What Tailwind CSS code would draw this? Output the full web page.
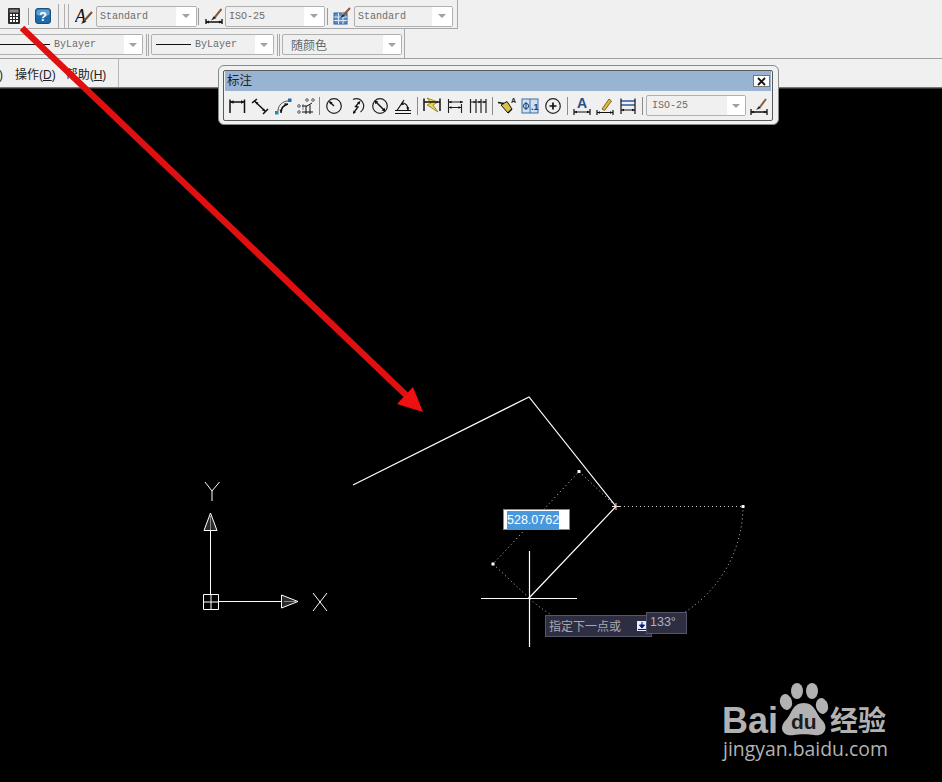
<!DOCTYPE html>
<html>
<head>
<meta charset="utf-8">
<script src="https://cdn.jsdelivr.net/npm/@tailwindcss/browser@4"></script>
</head>
<body class="bg-black">
<div class="relative w-[942px] h-[782px] overflow-hidden bg-black flex flex-col font-['Liberation_Sans','Noto_Sans_CJK_SC',sans-serif]">

  <!-- Toolbar row 1 -->
  <div class="h-[29px] shrink-0 bg-[#f0f0f0]">
    <div class="w-[458px] h-[29px] pt-[4px] border-r border-b border-[#a8a8a8] flex items-center">
      <svg class="ml-[6px] w-[16px] h-[18px] shrink-0" viewBox="0 0 16 18"><rect x="2" y="1" width="12" height="16" rx="1" fill="#2b2b2b"/><rect x="3.5" y="2.5" width="9" height="3" fill="#8a8a8a"/><g fill="#fff"><rect x="4" y="7" width="2" height="2"/><rect x="7" y="7" width="2" height="2"/><rect x="10" y="7" width="2" height="2"/><rect x="4" y="10" width="2" height="2"/><rect x="7" y="10" width="2" height="2"/><rect x="10" y="10" width="2" height="2"/><rect x="4" y="13" width="2" height="2"/><rect x="7" y="13" width="2" height="2"/><rect x="10" y="13" width="2" height="2"/></g></svg>
      <div class="ml-[6px] w-px h-[17px] bg-[#9a9a9a] shrink-0"></div>
      <svg class="ml-[6px] w-[16px] h-[16px] shrink-0" viewBox="0 0 16 16"><rect x="0.5" y="0.5" width="15" height="15" rx="2.5" fill="#1f6aa8" stroke="#174f80"/><rect x="1.5" y="1.5" width="13" height="6" rx="2" fill="#5f9fd0"/><text x="8" y="13" text-anchor="middle" class="font-['Liberation_Sans'] font-bold text-[13px] fill-white">?</text></svg>
      <div class="ml-[7px] w-px h-[24px] bg-[#a8a8a8] shrink-0"></div>
      <div class="ml-[5px] w-px h-[24px] bg-[#b0b0b0] shrink-0"></div>
      <div class="ml-[3px] w-px h-[24px] bg-[#b0b0b0] shrink-0"></div>
      <svg class="ml-[6px] w-[18px] h-[18px] shrink-0" viewBox="0 0 18 18"><text x="0" y="15" class="font-['Liberation_Serif'] italic text-[18px] fill-[#111]">A</text><path d="M6 17 L9 13 L11 15 Z" fill="#222"/><path d="M9.5 13.5 L17 5" stroke="#7a4a2a" stroke-width="2"/></svg>
      <div class="ml-[3px] w-[101px] h-[21px] shrink-0 border border-[#b0b0b0] rounded-[2px] bg-[#f0f0f0] flex items-center justify-between">
        <span class="ml-[3px] font-['Liberation_Mono'] text-[10px] text-[#6c6c6c]">Standard</span>
        <div class="w-[20px] h-[19px] bg-white flex items-center justify-center"><div class="w-0 h-0 border-x-[4px] border-t-[4px] border-x-transparent border-t-[#a0a0a0]"></div></div>
      </div>
      <div class="ml-[1px] w-px h-[17px] bg-[#9a9a9a] shrink-0"></div>
      <svg class="ml-[6px] w-[18px] h-[18px] shrink-0" viewBox="0 0 18 18"><path d="M1 12v5M17 12v5M1 15h16" stroke="#111" stroke-width="1.4" fill="none"/><path d="M1 15l3-1.5v3zM17 15l-3-1.5v3z" fill="#111"/><path d="M6 13.5 L9 9 L11.5 11 Z" fill="#222"/><path d="M10 10 L16.5 2" stroke="#8a5a35" stroke-width="2"/></svg>
      <div class="ml-[2px] w-[100px] h-[21px] shrink-0 border border-[#b0b0b0] rounded-[2px] bg-[#f0f0f0] flex items-center justify-between">
        <span class="ml-[3px] font-['Liberation_Mono'] text-[10px] text-[#6c6c6c]">ISO-25</span>
        <div class="w-[20px] h-[19px] bg-white flex items-center justify-center"><div class="w-0 h-0 border-x-[4px] border-t-[4px] border-x-transparent border-t-[#a0a0a0]"></div></div>
      </div>
      <div class="ml-[2px] w-px h-[17px] bg-[#9a9a9a] shrink-0"></div>
      <svg class="ml-[5px] w-[18px] h-[18px] shrink-0" viewBox="0 0 18 18"><rect x="1" y="6" width="13" height="11" fill="#5b8fc7" stroke="#2e5f96"/><path d="M1 10h13M1 13.5h13M5.5 6v11M10 6v11" stroke="#dbe8f5"/><path d="M7 11 L10 7 L12 9 Z" fill="#222"/><path d="M10.5 8 L17 1" stroke="#8a5a35" stroke-width="2"/></svg>
      <div class="ml-[3px] w-[99px] h-[21px] shrink-0 border border-[#b0b0b0] rounded-[2px] bg-[#f0f0f0] flex items-center justify-between">
        <span class="ml-[3px] font-['Liberation_Mono'] text-[10px] text-[#6c6c6c]">Standard</span>
        <div class="w-[20px] h-[19px] bg-white flex items-center justify-center"><div class="w-0 h-0 border-x-[4px] border-t-[4px] border-x-transparent border-t-[#a0a0a0]"></div></div>
      </div>
    </div>
  </div>

  <!-- Toolbar row 2 -->
  <div class="h-[30px] shrink-0 bg-[#f0f0f0] border-b border-[#a0a0a0]">
    <div class="w-[405px] h-[29px] pt-[2px] border-r border-[#a8a8a8] flex items-center">
      <div class="-ml-[10px] w-[153px] h-[21px] shrink-0 border border-[#b0b0b0] rounded-[2px] bg-[#f0f0f0] flex items-center justify-between">
        <div class="flex items-center">
          <div class="ml-[9px] w-[50px] h-px bg-[#111]"></div>
          <span class="ml-[4px] font-['Liberation_Mono'] text-[10px] text-[#6c6c6c]">ByLayer</span>
        </div>
        <div class="w-[18px] h-[19px] bg-white flex items-center justify-center"><div class="w-0 h-0 border-x-[4px] border-t-[4px] border-x-transparent border-t-[#a0a0a0]"></div></div>
      </div>
      <div class="ml-[3px] w-px h-[22px] bg-[#a8a8a8] shrink-0"></div>
      <div class="ml-[1px] w-px h-[22px] bg-[#a8a8a8] shrink-0"></div>
      <div class="ml-[2px] w-[123px] h-[21px] shrink-0 border border-[#b0b0b0] rounded-[2px] bg-[#f0f0f0] flex items-center justify-between">
        <div class="flex items-center">
          <div class="ml-[4px] w-[35px] h-px bg-[#111]"></div>
          <span class="ml-[4px] font-['Liberation_Mono'] text-[10px] text-[#6c6c6c]">ByLayer</span>
        </div>
        <div class="w-[18px] h-[19px] bg-white flex items-center justify-center"><div class="w-0 h-0 border-x-[4px] border-t-[4px] border-x-transparent border-t-[#a0a0a0]"></div></div>
      </div>
      <div class="ml-[3px] w-px h-[22px] bg-[#a8a8a8] shrink-0"></div>
      <div class="ml-[1px] w-px h-[22px] bg-[#a8a8a8] shrink-0"></div>
      <div class="ml-[2px] w-[120px] h-[21px] shrink-0 border border-[#b0b0b0] rounded-[2px] bg-[#f0f0f0] flex items-center justify-between">
        <span class="ml-[8px] font-['Noto_Sans_CJK_SC'] text-[12px] text-[#666]">随颜色</span>
        <div class="w-[18px] h-[19px] bg-white flex items-center justify-center"><div class="w-0 h-0 border-x-[4px] border-t-[4px] border-x-transparent border-t-[#a0a0a0]"></div></div>
      </div>
    </div>
  </div>

  <!-- Menu row -->
  <div class="h-[29px] shrink-0 bg-[#f0f0f0] border-b border-[#777]">
    <div class="w-[119px] h-[28px] pt-[3px] border-r border-[#b8b8b8] flex items-center text-[12px] text-[#222]">
      <span class="-ml-[1px] w-[16px]">)</span>
      <span>操作(<span class="underline">D</span>)</span>
      <span class="ml-[10px]">帮助(<span class="underline">H</span>)</span>
    </div>
  </div>

  <!-- Drawing area -->
  <div class="flex-1 bg-black border-t border-[#333]"></div>

  <!-- Drawing overlay -->
  <svg class="absolute inset-0 w-[942px] h-[782px]" viewBox="0 0 942 782" fill="none">
    <g stroke="#fff" stroke-width="1.2">
      <path d="M353 485 L529 397 L616 506.5 L529 598"/>
      <path d="M481 598.5H577M529.5 551V647"/>
    </g>
    <path d="M612 506.5H620M616 503V510" stroke="#ffd9c8"/>
    <g stroke="#cfcfcf" stroke-width="1" stroke-dasharray="1 3">
      <path d="M616 506.5H743"/>
      <path d="M743 506.5 A127 127 0 0 1 529 598"/>
      <path d="M529 598 L493 564 L579 471.5 L616 506.5"/>
    </g>
    <g fill="#fff">
      <rect x="491.5" y="562.5" width="3" height="3"/>
      <rect x="577.5" y="470" width="3" height="3"/>
      <rect x="741.5" y="505" width="3" height="3"/>
    </g>

    <!-- UCS icon -->
    <g stroke="#fff" stroke-width="1">
      <path d="M203.5 594.5H218.5V609.5H203.5ZM211 594.5V609.5M203.5 602H218.5"/>
      <path d="M210.5 594V530M218.5 601.5H282"/>
      <path d="M204 530.5H217L210.5 513Z" fill="#2a2a2a"/>
      <path d="M281.5 595V608L298 601.5Z" fill="#2a2a2a"/>
      <path d="M210.5 516V530M284 601.5H296" stroke="#888"/>
      <path d="M205 482L212 491L219.5 482M212 491V501"/>
      <path d="M313 593L327 611M327 593L313 611"/>
    </g>

    <!-- Red arrow -->
    <path d="M22 28 L406 395" stroke="#e01010" stroke-width="6.5"/>
    <path d="M413 387 L423 412 L397 404 Z" fill="#f01010"/>

    <!-- Watermark -->
    <g fill="#b2b2b2">
      <ellipse cx="786" cy="702" rx="6" ry="8" transform="rotate(-15 786 702)"/>
      <ellipse cx="797" cy="691" rx="6" ry="8"/>
      <ellipse cx="812" cy="691" rx="6" ry="8"/>
      <ellipse cx="822" cy="706" rx="6" ry="8" transform="rotate(-15 822 706)"/>
      <path d="M804 703C792 703 792 714 786 720C778 728 783 737 794 735C799 734 809 734 814 735C825 737 829 727 822 720C816 714 815 703 804 703Z"/>
    </g>
    <text x="722" y="733" class="font-['Liberation_Sans'] font-bold text-[36px] fill-[#b2b2b2]">Bai</text>
    <text x="791" y="729" class="font-['Liberation_Sans'] font-bold text-[21px] fill-[#1c1c1c]">du</text>
    <text x="830" y="731" class="font-['Noto_Sans_CJK_SC'] font-bold text-[28px] fill-[#b2b2b2]">经验</text>
    <text x="723" y="756" class="font-['Open_Sans'] text-[19.4px] fill-[#b2b2b2]">jingyan.baidu.com</text>
  </svg>

  <!-- Dynamic input -->
  <div class="absolute left-[503px] top-[509px] w-[67px] h-[21px] bg-white border border-[#888] flex items-center pl-[3px]">
    <span class="bg-[#4a98dc] text-white text-[12.5px] leading-[18px] h-[18px]">528.0762</span>
  </div>

  <!-- Prompt tooltip -->
  <div class="absolute left-[545px] top-[615px] w-[107px] h-[22px] bg-[#2e2e42] border border-[#55556a] flex items-center pl-[3px]">
    <span class="text-[12px] text-[#a8a8b4] font-['Noto_Sans_CJK_SC']">指定下一点或</span>
    <svg class="ml-[16px] w-[10px] h-[10px]" viewBox="0 0 10 10"><rect width="10" height="10" fill="#e8ecff"/><path d="M5 1V6M2.5 4L5 7L7.5 4Z" stroke="#0a1a70" fill="#0a1a70"/><path d="M1 8.5H9" stroke="#0a1a70"/></svg>
  </div>
  <div class="absolute left-[646px] top-[612px] w-[41px] h-[22px] bg-[#2e2e42] border border-[#55556a] flex items-center pl-[3px] pb-[1px]">
    <span class="text-[12.5px] text-[#b0b0bc]">133°</span>
  </div>

  <!-- Floating dimension toolbar -->
  <div class="absolute left-[218px] top-[65px] w-[561px] h-[60px] border border-[#8a8a8a] rounded-[6px] bg-[#eef2f2] pl-[4px] pr-[5px] pt-[4px] pb-[3px]">
    <div class="h-[51px] border border-[#5a5a5a] rounded-[2px] bg-[#f0f0f0] pl-[1px] pr-[1px] flex flex-col">
      <div class="h-[20px] bg-[#98b4d2] flex items-center justify-between shrink-0">
        <span class="ml-[2px] pb-[2px] text-[12.5px] text-[#222] font-['Noto_Sans_CJK_SC']">标注</span>
        <div class="mr-[1px] w-[17px] h-[12px] bg-white border border-[#777] flex items-center justify-center">
          <svg class="w-[9px] h-[9px]" viewBox="0 0 9 9"><path d="M1 1L8 8M8 1L1 8" stroke="#111" stroke-width="1.8"/></svg>
        </div>
      </div>
      <div class="flex-1 flex items-center">
        <!-- group 1 -->
        <div class="w-[23px] flex justify-center"><svg class="w-[20px] h-[20px]" viewBox="0 0 20 20" fill="none"><path d="M3 3.5V17M17.5 3.5V17M3 6H17.5" stroke="#111" stroke-width="1.5"/><path d="M3 6l3.5-1.7v3.4zM17.5 6l-3.5-1.7v3.4z" fill="#111"/></svg></div>
        <div class="w-[23px] flex justify-center"><svg class="w-[20px] h-[20px]" viewBox="0 0 20 20" fill="none"><path d="M2 7L7 3M13 18L18 13M5 5.5L15.5 15.5" stroke="#111" stroke-width="1.5"/><path d="M5 5.5l3.5 1-2 2zM15.5 15.5l-3.5-1 2-2z" fill="#111"/></svg></div>
        <div class="w-[23px] flex justify-center"><svg class="w-[20px] h-[20px]" viewBox="0 0 20 20" fill="none"><path d="M5 15C5 9 10 5 15 5" stroke="#555" stroke-width="1"/><path d="M8 17C8 12 11 9 15 8" stroke="#111" stroke-width="1.4"/><path d="M8 17l-1.5-3.5 3 .5zM15 8l-3.5-1 .5 3z" fill="#111"/><rect x="2" y="15" width="3.5" height="3.5" fill="#2a8aa0"/><rect x="15" y="2.5" width="3.5" height="3.5" fill="#2a6aa0"/></svg></div>
        <div class="w-[23px] flex justify-center"><svg class="w-[20px] h-[20px]" viewBox="0 0 20 20" fill="none"><g stroke="#333" stroke-width="0.8"><circle cx="11" cy="4" r="1.3"/><circle cx="17" cy="4" r="1.3"/><circle cx="3" cy="10" r="1.3"/><circle cx="3" cy="16" r="1.3"/></g><path d="M6 10H11L16 7M6 16H17M10 18V10M14 18V9" stroke="#111"/><path d="M7 8.5V14" stroke="#111" stroke-dasharray="1 1"/></svg></div>
        <div class="w-[5px] flex justify-center"><div class="w-px h-[18px] bg-[#8a8a8a]"></div></div>
        <!-- group 2 -->
        <div class="w-[23px] flex justify-center"><svg class="w-[20px] h-[20px]" viewBox="0 0 20 20" fill="none"><circle cx="10" cy="10" r="7.3" stroke="#222" stroke-width="1.2"/><path d="M10 10L5.5 5.8" stroke="#111" stroke-width="1.3"/><path d="M5 5.2l3.6 1-2.4 2.4z" fill="#111"/></svg></div>
        <div class="w-[23px] flex justify-center"><svg class="w-[20px] h-[20px]" viewBox="0 0 20 20" fill="none"><path d="M6 3.5A7.3 7.3 0 0 1 13.5 16" stroke="#222" stroke-width="1.2"/><path d="M12.5 6L8.5 10.5L11 11L6.5 17" stroke="#111" stroke-width="1.3"/><path d="M13.5 5l-1 3.6-2.4-2.2zM6 18l.6-3.6 2.4 1.8z" fill="#111"/></svg></div>
        <div class="w-[23px] flex justify-center"><svg class="w-[20px] h-[20px]" viewBox="0 0 20 20" fill="none"><circle cx="10" cy="10" r="7.3" stroke="#222" stroke-width="1.2"/><path d="M5.5 5.5L14.5 14.5" stroke="#111" stroke-width="1.4"/><path d="M4.5 4.5l3.8.9-2.9 2.9zM15.5 15.5l-3.8-.9 2.9-2.9z" fill="#111"/></svg></div>
        <div class="w-[23px] flex justify-center"><svg class="w-[20px] h-[20px]" viewBox="0 0 20 20" fill="none"><path d="M2 14.5H18M2 17.5H18M4 14.5L11 4" stroke="#111" stroke-width="1.2"/><path d="M9 6.5C12 7 15 9.5 15 14" stroke="#111" stroke-width="1.2"/><path d="M9 6l2.5 2.6-3.2.6zM15 14.5l-1.8-3 3-.2z" fill="#111"/></svg></div>
        <div class="w-[6px] flex justify-center"><div class="w-px h-[18px] bg-[#8a8a8a]"></div></div>
        <!-- group 3 -->
        <div class="w-[23px] flex justify-center"><svg class="w-[20px] h-[20px]" viewBox="0 0 20 20" fill="none"><path d="M5 2L16 6L11 9L16 16L5 9L9 7Z" fill="#e8d24a" stroke="#8a7a20" stroke-width="0.8"/><path d="M2 2.5V15M18 2.5V15M2 6H18" stroke="#111" stroke-width="1.5"/></svg></div>
        <div class="w-[23px] flex justify-center"><svg class="w-[20px] h-[20px]" viewBox="0 0 20 20" fill="none"><path d="M3.5 3V17M16.5 8V17M3.5 6H18M3.5 11.5H16.5" stroke="#222" stroke-width="1.1"/><path d="M18 6l-3-1.3v2.6zM3.5 6l3-1.3v2.6zM3.5 11.5l3-1.3v2.6zM16.5 11.5l-3-1.3v2.6z" fill="#111"/></svg></div>
        <div class="w-[23px] flex justify-center"><svg class="w-[20px] h-[20px]" viewBox="0 0 20 20" fill="none"><path d="M2.5 3V17M8 3V17M13 3V17M18 3V17M2.5 6H18" stroke="#222" stroke-width="1.2"/><path d="M8 6l-2.5-1.2v2.4zM13 6l-2.5-1.2v2.4zM18 6l-2.5-1.2v2.4z" fill="#111"/></svg></div>
        <div class="w-[6px] flex justify-center"><div class="w-px h-[18px] bg-[#8a8a8a]"></div></div>
        <!-- group 4 -->
        <div class="w-[23px] flex justify-center"><svg class="w-[20px] h-[20px]" viewBox="0 0 20 20" fill="none"><path d="M4 9L10 5.5L15 13L11 17Z" fill="#d8c24a" stroke="#111" stroke-width="1"/><path d="M1 6.5L7 7.5M11 17L15 13" stroke="#111" stroke-width="1.3"/><text x="14" y="7" class="font-['Liberation_Sans'] font-bold text-[7px] fill-[#222]">A</text></svg></div>
        <div class="w-[23px] flex justify-center"><svg class="w-[20px] h-[20px]" viewBox="0 0 20 20" fill="none"><rect x="2" y="3" width="16" height="14" fill="#cfe0f2" stroke="#3a6ea5"/><path d="M10 3V17" stroke="#3a6ea5"/><circle cx="6" cy="10" r="2.6" stroke="#1c3f70"/><path d="M6 6V14" stroke="#1c3f70"/><text x="11" y="14" class="font-['Liberation_Sans'] font-bold text-[9px] fill-[#1c3f70]">.1</text></svg></div>
        <div class="w-[23px] flex justify-center"><svg class="w-[20px] h-[20px]" viewBox="0 0 20 20" fill="none"><circle cx="10" cy="10" r="7.3" stroke="#222" stroke-width="1.2"/><path d="M6.5 10H13.5M10 6.5V13.5" stroke="#111" stroke-width="1.7"/></svg></div>
        <div class="w-[6px] flex justify-center"><div class="w-px h-[18px] bg-[#8a8a8a]"></div></div>
        <!-- group 5 -->
        <div class="w-[23px] flex justify-center"><svg class="w-[20px] h-[20px]" viewBox="0 0 20 20" fill="none"><text x="10" y="12" text-anchor="middle" class="font-['Liberation_Sans'] font-bold text-[14px] fill-[#24508c]">A</text><path d="M2 13V19M18 13V19M2 16H18" stroke="#111" stroke-width="1.2"/><path d="M2 16l3-1.3v2.6zM18 16l-3-1.3v2.6z" fill="#111"/></svg></div>
        <div class="w-[23px] flex justify-center"><svg class="w-[20px] h-[20px]" viewBox="0 0 20 20" fill="none"><path d="M7 13L14 3L16.5 5L9.5 14.5Z" fill="#e0b83c" stroke="#5a4a10" stroke-width="0.8"/><path d="M2 14V19M18 14V19M2 16.5H18" stroke="#111" stroke-width="1.2"/><path d="M2 16.5l3-1.3v2.6zM18 16.5l-3-1.3v2.6z" fill="#111"/></svg></div>
        <div class="w-[23px] flex justify-center"><svg class="w-[20px] h-[20px]" viewBox="0 0 20 20" fill="none"><path d="M3 5H17M3 9H17" stroke="#2a5a9a" stroke-width="1.3"/><path d="M3 2.5V18M17 2.5V18M3 14H17" stroke="#111" stroke-width="1.2"/><path d="M3 14l3-1.3v2.6zM17 14l-3-1.3v2.6z" fill="#111"/></svg></div>
        <div class="w-[6px] flex justify-center"><div class="w-px h-[18px] bg-[#8a8a8a]"></div></div>
        <!-- combo -->
        <div class="ml-[1px] w-[100px] h-[21px] shrink-0 border border-[#b0b0b0] rounded-[2px] bg-[#f0f0f0] flex items-center justify-between">
          <span class="ml-[5px] font-['Liberation_Mono'] text-[10px] text-[#6c6c6c]">ISO-25</span>
          <div class="w-[18px] h-[19px] bg-white flex items-center justify-center"><div class="w-0 h-0 border-x-[4px] border-t-[4px] border-x-transparent border-t-[#a0a0a0]"></div></div>
        </div>
        <div class="ml-[1px] w-[23px] flex justify-center"><svg class="w-[20px] h-[20px]" viewBox="0 0 20 20" fill="none"><path d="M2 13V19M18 13V19M2 16H18" stroke="#111" stroke-width="1.3"/><path d="M2 16l3-1.3v2.6zM18 16l-3-1.3v2.6z" fill="#111"/><path d="M7 14L10 10L12 12Z" fill="#222"/><path d="M11 11L17 3" stroke="#8a5a35" stroke-width="2"/></svg></div>
      </div>
    </div>
  </div>
</div>
</body>
</html>
